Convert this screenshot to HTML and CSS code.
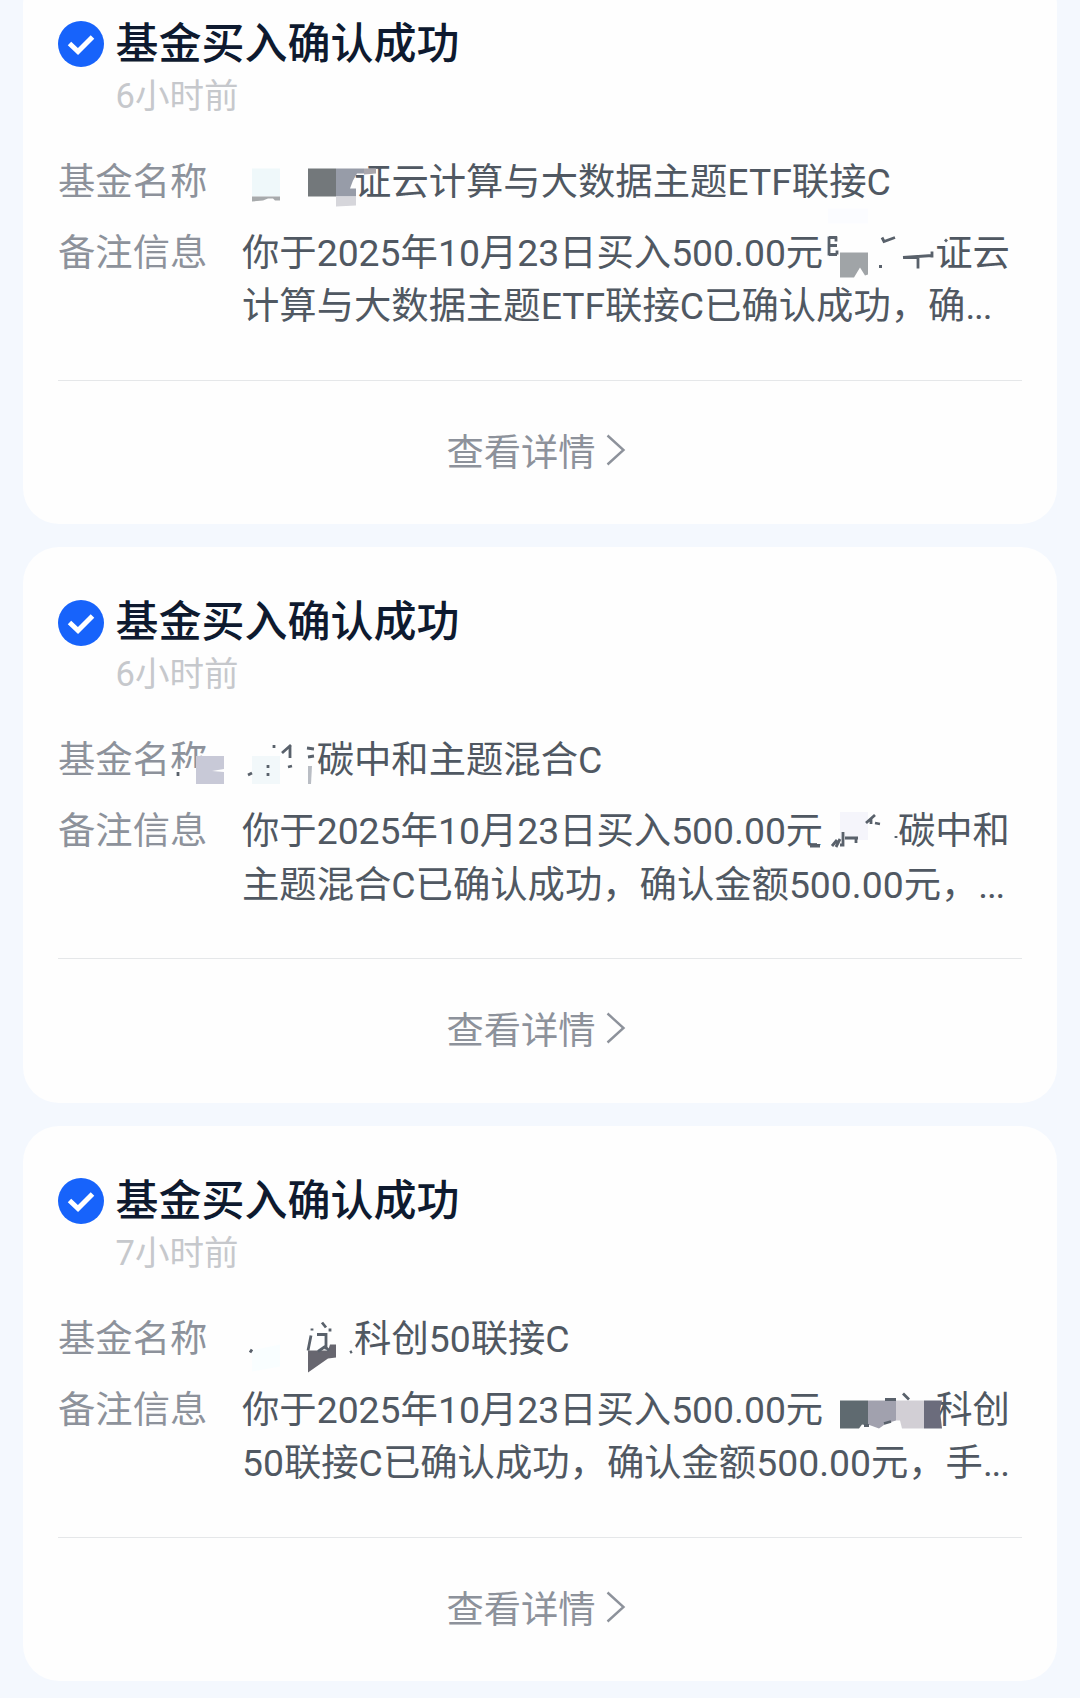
FILE: index.html
```html
<!DOCTYPE html>
<html lang="zh-CN">
<head>
  <meta charset="UTF-8">
  <meta name="viewport" content="width=device-width, initial-scale=1.0">
  <title>基金消息</title>
  <link rel="stylesheet" href="styles.css">
</head>
<body>
  <main class="list">
    <section class="card">
      <div class="card-head">
        <svg class="check-icon" viewBox="0 0 46 46"><circle cx="23" cy="23" r="23"/><path d="M11.5 22.5l8.500 8L34.500 16"/></svg>
        <div class="head-text">
          <h2 class="title">基金买入确认成功</h2>
          <p class="time">6小时前</p>
        </div>
      </div>
      <div class="row">
        <span class="label">基金名称</span>
        <p class="value"><span class="masked masked-3"></span>证云计算与大数据主题ETF联接C</p>
      </div>
      <div class="row">
        <span class="label">备注信息</span>
        <p class="value">你于2025年10月23日买入500.00元<span class="masked masked-3"></span>证云<br>计算与大数据主题ETF联接C已确认成功，确<span class="dots">...</span></p>
      </div>
      <a class="more">查看详情<svg class="arrow" viewBox="0 0 20 32"><path d="M1.5 1.5L17.5 16L1.5 30.5"/></svg></a>
      <svg class="mosaic" viewBox="23 -31.5 1034 555.5">
        <path fill="#fefefe" d="M350 160h16v14h-16zM938 230h11v15h-11z"/>
        <path fill="#eff8fa" d="M252 168h28v28h-28z"/>
        <path fill="#a7aaac" d="M252 196h28v4h-5l-2-2h-5l-5 2-11 1z"/>
        <path fill="#73787b" d="M308 168h28v28h-28z"/>
        <path fill="#979ca8" d="M336 168h28v5h-7l-4 7-3 8h6v8h-20z"/>
        <path fill="#aaa7ad" d="M364 168h12v5l-12 1z"/>
        <path fill="#d6d6db" d="M336 196h20v9l-20 1z"/>
        <path fill="#fbfcff" d="M828 208h40v15h-40z"/>
        <path fill="#a0a4a7" d="M840 252h28v22l-3 1-5-8-6 10h-14z"/>
        <path class="bits" d="M829 236v19M829 237h8M829 245h8M829 254h8M836 236v5M837 250v4M882 237l2 4 11-4M879 266h3M903 257l29-2M932 251v6M918 255v13M945 239l2 2"/>
      </svg>
    </section>

    <section class="card">
      <div class="card-head">
        <svg class="check-icon" viewBox="0 0 46 46"><circle cx="23" cy="23" r="23"/><path d="M11.5 22.5l8.500 8L34.500 16"/></svg>
        <div class="head-text">
          <h2 class="title">基金买入确认成功</h2>
          <p class="time">6小时前</p>
        </div>
      </div>
      <div class="row">
        <span class="label">基金名称</span>
        <p class="value"><span class="masked masked-2"></span>碳中和主题混合C</p>
      </div>
      <div class="row">
        <span class="label">备注信息</span>
        <p class="value">你于2025年10月23日买入500.00元<span class="masked masked-2"></span>碳中和<br>主题混合C已确认成功，确认金额500.00元，<span class="dots">...</span></p>
      </div>
      <a class="more">查看详情<svg class="arrow" viewBox="0 0 20 32"><path d="M1.5 1.5L17.5 16L1.5 30.5"/></svg></a>
      <svg class="mosaic" viewBox="23 547 1034 555.5">
        <path fill="#fefefe" d="M196 757h12v24h-12zM181 768h16v14h-16zM174 769h8v10h-8zM817 830h8v14h-8z"/>
        <path fill="#c8c9d7" d="M196 756h28v13l-12 2 12 1v12h-28z"/>
        <path fill="#f2f8fa" d="M252 756h28v28h-28z"/>
        <path fill="#f5f5fb" d="M840 812h28v28h-28z"/>
        <path fill="#b9bdc4" d="M308 766h4l-1 18h-3z"/>
        <path class="bits" d="M178 772v4M274 745v3M268 765v3M268 773v3M248 775l4-2M282 753l9-8M290 746v12M288 767l4-1M307 748l7 1M308 757l6-1M810 846h10M832 846l5-6M836 847l4-8M843 832v13h-3M845 838h13M856 838v5M866 823l9-8M871 818v6M875 823l5 1M896 836v2"/>
      </svg>
    </section>

    <section class="card">
      <div class="card-head">
        <svg class="check-icon" viewBox="0 0 46 46"><circle cx="23" cy="23" r="23"/><path d="M11.5 22.5l8.500 8L34.500 16"/></svg>
        <div class="head-text">
          <h2 class="title">基金买入确认成功</h2>
          <p class="time">7小时前</p>
        </div>
      </div>
      <div class="row">
        <span class="label">基金名称</span>
        <p class="value"><span class="masked masked-3"></span>科创50联接C</p>
      </div>
      <div class="row">
        <span class="label">备注信息</span>
        <p class="value">你于2025年10月23日买入500.00元<span class="masked masked-3"></span>科创<br>50联接C已确认成功，确认金额500.00元，手<span class="dots">...</span></p>
      </div>
      <a class="more">查看详情<svg class="arrow" viewBox="0 0 20 32"><path d="M1.5 1.5L17.5 16L1.5 30.5"/></svg></a>
      <svg class="mosaic" viewBox="23 1125.5 1034 555.5">
        <path fill="#f9feff" d="M252 1350l28-6v22l-28 5z"/>
        <path fill="#67666f" d="M308 1350h20l2-6h6v13l-8 1-20 14z"/>
        <path fill="#5f6a70" d="M840 1400h28v25l-6-1-3 4h-19z"/>
        <path fill="#a1a1ae" d="M868 1400h28v20l-10 3-7 5-11-4z"/>
        <path fill="#d2cfd5" d="M896 1400h28v28h-22l-2-8h-4z"/>
        <path fill="#6b6c7c" d="M924 1400h18l-2 10 2 18h-18z"/>
        <path class="bits" d="M250 1352l2-3M312 1328v2M308 1350l3-15M322 1322l4 5M317 1334h9v15M330 1328v3M318 1351l7-5 4 4M350 1352l2-1M864 1425h5M885 1399h11M903 1393l6 6M884 1423l7-2"/>
      </svg>
    </section>
  </main>
</body>
</html>
```

FILE: styles.css
```css
*{
  box-sizing: border-box;
}
body{
  margin: 0;
  height: 1698px;
  overflow: hidden;
  background-color: #f4f8fe;
  font-family: Roboto, "Noto Sans CJK SC", sans-serif;
}
h2, p{
  margin: 0;
}
/* first card is scrolled partly off the top */
.list{
  display: flex;
  flex-direction: column;
  gap: 23px;
  margin-top: -31.5px;
  padding: 0 23px;
}
.card{
  position: relative;
  flex: none;
  height: 555.5px;
  padding: 46px 35px 0;
  background-color: #fefefe;
  border-radius: 36px;
}
.card-head{
  display: flex;
  gap: 11.5px;
  height: 141px;
}
.check-icon{
  width: 46px;
  height: 46px;
  margin-top: 6.5px;
}
.check-icon circle{
  fill: #1763fb;
}
.check-icon path{
  fill: none;
  stroke: white;
  stroke-width: 5;
}
.head-text{
  padding-top: 2px;
}
.title{
  font-size: 43px;
  font-weight: 500;
  line-height: 54px;
  color: #0e1a2f;
}
.time{
  font-size: 34.5px;
  line-height: 50px;
  color: #c6c8cc;
}
.row{
  display: flex;
  font-size: 37.35px;
  line-height: 53.5px;
  margin-bottom: 17.5px;
}
.label{
  width: 184px;
  flex: none;
  color: #8d929b;
}
.value{
  color: #505862;
  white-space: nowrap;
}
.dots{
  letter-spacing: -1.2px;
}
.masked{
  display: inline-block;
}
.masked-2{
  width: 2em;
}
.masked-3{
  width: 3em;
}
.more{
  display: flex;
  justify-content: center;
  align-items: center;
  gap: 10px;
  height: 139px;
  margin-top: 46px;
  padding-right: 8px;
  border-top: 1px solid #e5e7e9;
  font-size: 37.3px;
  color: #8d929b;
}
.arrow{
  width: 20px;
  height: 32px;
}
.arrow path{
  fill: none;
  stroke: #8d929b;
  stroke-width: 2.4;
}
.mosaic{
  position: absolute;
  left: 0;
  top: 0;
  width: 100%;
  height: 100%;
}
.bits{
  fill: none;
  stroke: #59616b;
  stroke-width: 2.8;
}
```
